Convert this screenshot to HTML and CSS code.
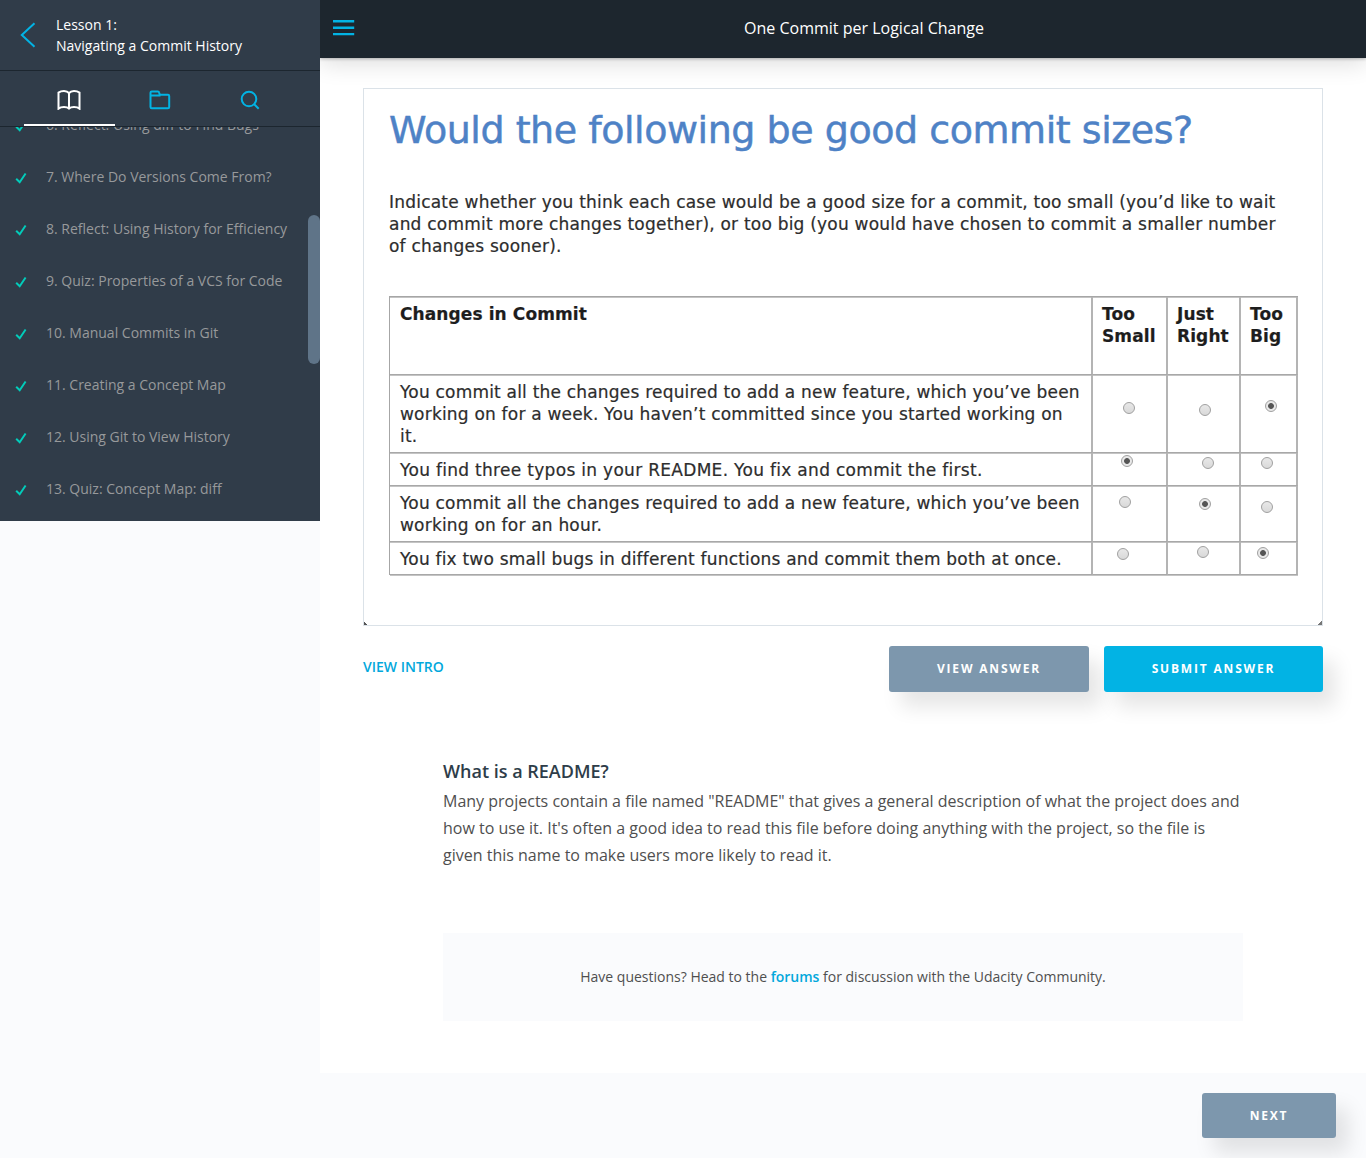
FILE: index.html
```html
<!DOCTYPE html>
<html lang="en">
<head>
<meta charset="utf-8">
<title>One Commit per Logical Change</title>
<link rel="stylesheet" href="styles.css">
</head>
<body>
<div class="app">
  <aside class="sidebar">
    <div class="sidebar-panel">
      <header class="lesson">
        <svg class="back" width="16" height="26" viewBox="0 0 16 26"><path d="M14.500 1.200 1.800 13l12.700 11.800"/></svg>
        <div class="lesson-title">Lesson 1:<br>Navigating a Commit History</div>
      </header>
      <nav class="tabs">
        <a class="tab tab-active"><svg width="24" height="20" viewBox="0 0 24 20"><path d="M12 3.200C10.800 1.500 9 1 7 1S3 1.500 1.500 2.600V18.600C3 17.400 5 17 7 17s3.800.4 5 1.600C13.200 17.400 15 17 17 17s4 .4 5.500 1.600V2.600C21 1.500 19 1 17 1s-3.800.5-5 2.200zM12 3.200V18"/></svg></a>
        <a class="tab"><svg width="22" height="20" viewBox="0 0 22 20"><path d="M1.500 17V2.700q0-1.200 1.200-1.200h6.200q1 0 1.300 1.300l.6 1.900h8.200q1.200 0 1.200 1.200V17q0 1.200-1.200 1.200H2.700Q1.500 18.200 1.500 17zM1.500 5.500h10"/></svg></a>
        <a class="tab tab-search"><svg width="20" height="20" viewBox="0 0 20 20"><circle cx="9" cy="9" r="7.300"/><path d="m14.200 14.200 4.500 4.500"/></svg></a>
      </nav>
      <div class="list-wrap">
        <ul class="list">
          <li><svg width="12" height="12" viewBox="0 0 12 12"><path d="M1.200 6.700 4.700 10.200 10.600 1.500"/></svg>6. Reflect: Using diff to Find Bugs</li>
          <li><svg width="12" height="12" viewBox="0 0 12 12"><path d="M1.200 6.700 4.700 10.200 10.600 1.500"/></svg>7. Where Do Versions Come From?</li>
          <li><svg width="12" height="12" viewBox="0 0 12 12"><path d="M1.200 6.700 4.700 10.200 10.600 1.500"/></svg>8. Reflect: Using History for Efficiency</li>
          <li><svg width="12" height="12" viewBox="0 0 12 12"><path d="M1.200 6.700 4.700 10.200 10.600 1.500"/></svg>9. Quiz: Properties of a VCS for Code</li>
          <li><svg width="12" height="12" viewBox="0 0 12 12"><path d="M1.200 6.700 4.700 10.200 10.600 1.500"/></svg>10. Manual Commits in Git</li>
          <li><svg width="12" height="12" viewBox="0 0 12 12"><path d="M1.200 6.700 4.700 10.200 10.600 1.500"/></svg>11. Creating a Concept Map</li>
          <li><svg width="12" height="12" viewBox="0 0 12 12"><path d="M1.200 6.700 4.700 10.200 10.600 1.500"/></svg>12. Using Git to View History</li>
          <li><svg width="12" height="12" viewBox="0 0 12 12"><path d="M1.200 6.700 4.700 10.200 10.600 1.500"/></svg>13. Quiz: Concept Map: diff</li>
        </ul>
        <div class="thumb"></div>
      </div>
    </div>
  </aside>
  <main class="main">
    <header class="topbar">
      <svg class="menu" width="22" height="16" viewBox="0 0 22 16"><path d="M0 1.300h21.200M0 7.800h21.200M0 14.100h21.200"/></svg>
      <h1 class="topbar-title">One Commit per Logical Change</h1>
    </header>
    <div class="content">
      <section class="quiz">
        <h2 class="quiz-title">Would the following be good commit sizes?</h2>
        <p class="quiz-text">Indicate whether you think each case would be a good size for a commit, too small (you’d like to wait<br>and commit more changes together), or too big (you would have chosen to commit a smaller number<br>of changes sooner).</p>
        <div class="grid">
          <div class="cell head">Changes in Commit</div><div class="cell head">Too<br>Small</div><div class="cell head">Just<br>Right</div><div class="cell head">Too<br>Big</div>
          <div class="cell">You commit all the changes required to add a new feature, which you’ve been<br>working on for a week. You haven’t committed since you started working on<br>it.</div><div class="cell"><i class="radio r1a"></i></div><div class="cell"><i class="radio r1b"></i></div><div class="cell"><i class="radio on r1c"></i></div>
          <div class="cell typos">You find three typos in your README. You fix and commit the first.</div><div class="cell"><i class="radio on r2a"></i></div><div class="cell"><i class="radio r2b"></i></div><div class="cell"><i class="radio r2c"></i></div>
          <div class="cell">You commit all the changes required to add a new feature, which you’ve been<br>working on for an hour.</div><div class="cell"><i class="radio r3a"></i></div><div class="cell"><i class="radio on r3b"></i></div><div class="cell"><i class="radio r3c"></i></div>
          <div class="cell">You fix two small bugs in different functions and commit them both at once.</div><div class="cell"><i class="radio r4a"></i></div><div class="cell"><i class="radio r4b"></i></div><div class="cell"><i class="radio on r4c"></i></div>
        </div>
        <i class="corner corner-left"></i><i class="corner corner-right"></i>
      </section>
      <div class="actions">
        <a class="intro">VIEW INTRO</a>
        <button class="btn view">VIEW ANSWER</button>
        <button class="btn submit">SUBMIT ANSWER</button>
      </div>
      <section class="notes">
        <h3 class="notes-title">What is a README?</h3>
        <p class="notes-text">Many projects contain a file named "README" that gives a general description of what the project does and<br>how to use it. It's often a good idea to read this file before doing anything with the project, so the file is<br>given this name to make users more likely to read it.</p>
        <p class="forum">Have questions? Head to the&nbsp;<a>forums</a>&nbsp;for discussion with the Udacity Community.</p>
      </section>
    </div>
    <footer class="footer"><button class="btn next">NEXT</button></footer>
  </main>
</div>
</body>
</html>
```
FILE: styles.css
```css
* { box-sizing: border-box; }
body { margin: 0; font-family: "Open Sans", sans-serif; background: #fafbfd; }
h1, h2, h3, p, ul { margin: 0; padding: 0; font-weight: 400; }
svg { fill: none; stroke: #02b3e4; stroke-width: 2; flex: none; }
.app { display: flex; width: 1366px; height: 1158px; overflow: hidden; }

.sidebar { width: 320px; flex: none; }
.sidebar-panel { height: 521px; background: #303c49; display: flex; flex-direction: column; }
.lesson { height: 71px; border-bottom: 1px solid #1c262f; display: flex; align-items: center; padding-left: 20px; }
.lesson-title { margin-left: 20px; color: #fff; font-size: 14px; line-height: 21px; }
.tabs { height: 56px; border-bottom: 1px solid #1c262f; display: flex; padding: 0 24px; }
.tab { width: 91px; display: flex; align-items: center; justify-content: center; padding-top: 5px; border-bottom: 2px solid transparent; }
.tab-active { border-color: #fff; }
.tab-active svg { stroke: #fff; }
.tab-search { padding-right: 2px; }
.list-wrap { flex: 1; position: relative; overflow: hidden; }
.list { list-style: none; margin-top: -29px; }
.list li { height: 52px; display: flex; align-items: center; padding-left: 15px; color: #97999b; font-size: 14px; white-space: nowrap; }
.list svg { stroke: #02ccba; margin: 3px 19px 0 0; }
.thumb { position: absolute; right: 0; top: 88px; width: 12px; height: 149px; border-radius: 6px; background: #5f7488; }

.main { flex: 1; display: flex; flex-direction: column; background: #fff; }
.topbar { height: 58px; background: #1d262e; display: flex; align-items: center; padding: 0 13px; box-shadow: 0 1px 3px rgba(0,0,0,.25), 0 5px 24px rgba(0,0,0,.14); clip-path: inset(0 0 -40px 0); }
.topbar-title { flex: 1; padding-left: 20px; padding-bottom: 2px; text-align: center; color: #fff; font-size: 16px; }
.menu { margin-bottom: 3px; stroke-width: 2.400; }
.content { flex: 1; padding: 30px 43px 0; }

.quiz { position: relative; width: 960px; height: 538px; border: 1px solid #dbe2e8; padding: 18px 25px 0; font-family: "DejaVu Sans", sans-serif; color: #2d2d2d; white-space: nowrap; }
.quiz-title { height: 46px; line-height: 46px; font-size: 38px; letter-spacing: -.46px; color: #4e82c6; -webkit-text-stroke: .5px #4e82c6; }
.quiz-text { margin-top: 38px; font-size: 17px; line-height: 22.200px; letter-spacing: .215px; -webkit-text-stroke: .2px #2d2d2d; }
.grid { display: grid; width: 909px; margin-top: 38px; grid-template-columns: 703px 75px 73px 57px; grid-template-rows: 78px 78px 33px 56px 33px; border-top: 1px solid #a6a6a6; border-left: 1px solid #a6a6a6; font-size: 17px; line-height: 22.200px; letter-spacing: .2px; -webkit-text-stroke: .2px #2d2d2d; }
.cell { position: relative; padding: 6px 0 0 10px; border-right: 1px solid #b4b4b4; border-bottom: 1px solid #a8a8a8; box-shadow: inset -1px 0 #b4b4b4, 0 1px #c4c4c4; }
.typos { letter-spacing: .3px; }
.head { font-weight: 700; color: #1d1d1d; letter-spacing: .100px; box-shadow: inset -1px 0 #b4b4b4, inset 0 1px #c4c4c4, 0 1px #c4c4c4; }
.head + .head { padding-left: 9px; }

/* Answer markers sit freely over the quiz sheet */
.radio { position: absolute; width: 12px; height: 12px; border: 1px solid #a0a0a0; border-radius: 50%; background: linear-gradient(#e8e8e8, #d9d9d9); }
.radio.on { background: radial-gradient(circle, #555 0 2.500px, #e8e8e8 3.300px); }
.r1a { left: 30px; top: 27px; } .r1b { left: 31px; top: 29px; } .r1c { left: 24px; top: 25px; }
.r2a { left: 28px; top: 2px; } .r2b { left: 34px; top: 4px; } .r2c { left: 20px; top: 4px; }
.r3a { left: 26px; top: 10px; } .r3b { left: 31px; top: 12px; } .r3c { left: 20px; top: 15px; }
.r4a { left: 24px; top: 6px; } .r4b { left: 29px; top: 4px; } .r4c { left: 16px; top: 5px; }
.corner { position: absolute; bottom: 0; width: 4px; height: 4px; }
.corner-left { left: 0; background: linear-gradient(45deg, #555 50%, transparent 50%); }
.corner-right { right: 0; background: linear-gradient(-45deg, #777 50%, transparent 50%); }

.actions { display: flex; margin-top: 20px; width: 960px; }
.intro { margin-right: auto; padding-top: 11px; color: #02a8dc; font-size: 14px; font-weight: 600; line-height: 20px; }
.btn { height: 46px; border: 0; border-radius: 3px; padding: 0 0 1px; color: #fff; background: #7d97ad; font: 700 12px "Open Sans", sans-serif; letter-spacing: 1.820px; box-shadow: 12px 15px 20px rgba(0,0,0,.1); }
.view { width: 200px; margin-right: 15px; }
.submit { width: 219px; background: #02b3e4; }
.notes { width: 800px; margin: 66px 0 0 80px; white-space: nowrap; }
.notes-title { color: #2e3d49; font-size: 18px; font-weight: 600; line-height: 27px; }
.notes-text { margin-top: 3px; color: #4f4f4f; font-size: 16px; line-height: 27px; }
.forum { display: flex; align-items: center; justify-content: center; height: 88px; margin-top: 64px; padding-bottom: 2px; background: #fafbfd; color: #4f4f4f; font-size: 14px; }
.forum a { color: #02a8dc; font-weight: 600; }
.footer { height: 85px; background: #fafbfd; display: flex; justify-content: flex-end; padding: 20px 30px 0 0; }
.next { width: 134px; height: 45px; }
```
